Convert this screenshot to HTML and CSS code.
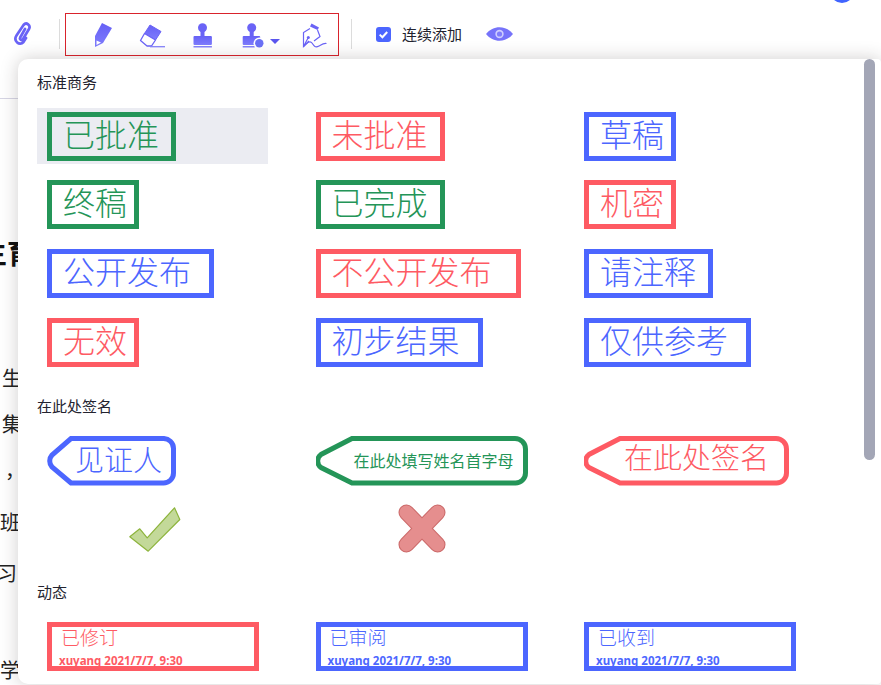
FILE: index.html
```html
<!DOCTYPE html>
<html lang="zh-CN">
<head>
<meta charset="utf-8">
<title>标准商务</title>
<link rel="stylesheet" href="styles.css">
</head>
<body>
<svg class="defs" width="0" height="0" aria-hidden="true">
  <defs>
    <linearGradient id="ig" x1="0" y1="0" x2="0" y2="1">
      <stop offset="0" stop-color="#6660f5"/>
      <stop offset="1" stop-color="#7f7dfd"/>
    </linearGradient>
  </defs>
</svg>
<div class="app">
  <header class="toolbar">
    <svg class="ic-clip" width="20" height="26" viewBox="0 0 20 26"><path d="M13 8 L8.2 16.5 C7.2 18.5 9.8 20 11 18 L17 8 C19 4.5 14.5 0.5 11.5 4 L4.5 14.5 C1 20 7.5 25.5 11.5 21 L14 17" fill="none" stroke="#6a63f6" stroke-width="2.7" stroke-linecap="round"/></svg>
    <span class="divider first"></span>
    <div class="tools">
      <svg class="ic-pencil" width="24" height="28" viewBox="0 0 24 28"><path d="M10 2 L20 7 L11 22 L3 26 L3 15 Z" fill="url(#ig)"/><path d="M4.5 19.5 L9 21.5 L4.5 24 Z" fill="#fff"/></svg>
      <svg class="ic-eraser" width="30" height="28" viewBox="0 0 30 28"><path d="M14 4 L25 10.5 L19.5 19 L8.5 12.5 Z" fill="url(#ig)" stroke="#6a63f6"/><path d="M8.5 12.5 L19.5 19 L15.5 25 L11 25 L4.5 19.5 Z" fill="#fff" stroke="#6a63f6" stroke-width="1.3" stroke-linejoin="round"/><path d="M14 25.7 H29" stroke="#8684fb" stroke-width="1.3"/></svg>
      <svg class="ic-stamp" width="20" height="28" viewBox="0 0 20 28"><circle cx="9.5" cy="6.7" r="4.5" fill="#6a63f6"/><rect x="7.5" y="9" width="4" height="7" fill="#6a63f6"/><rect x="0.5" y="15" width="18.4" height="9" rx="1" fill="url(#ig)"/><rect x="0.5" y="25" width="18.4" height="1.5" fill="#8684fb"/></svg>
      <span class="stamp-menu">
        <svg width="22" height="28" viewBox="0 0 22 28"><circle cx="9.7" cy="6.7" r="4.5" fill="#6a63f6"/><rect x="7.7" y="9" width="4" height="7" fill="#6a63f6"/><rect x="0.7" y="15" width="17.5" height="9" rx="1" fill="url(#ig)"/><rect x="0.7" y="25" width="12" height="1.5" fill="#8684fb"/><circle cx="17.3" cy="22.3" r="5.8" fill="#fff"/><circle cx="17.3" cy="22.3" r="4.2" fill="#6a70f6"/></svg>
        <svg class="caret" width="10" height="5" viewBox="0 0 10 5"><path d="M0 0 H10 L5 5 Z" fill="#5a55ee"/></svg>
      </span>
      <svg class="ic-sign" width="26" height="28" viewBox="0 0 26 28"><path d="M9.5 2.5 L17 6.5 L15.5 9 L8 5.5 Z" fill="#6a63f6"/><path d="M8 7.5 L1.5 11.5 L1.5 25.5 L7 20 M15.5 9 L18 15.5 L12 20" fill="none" stroke="#6a63f6" stroke-width="1.2"/><circle cx="6.3" cy="16.5" r="1.5" fill="#6a63f6"/><path d="M1.5 25.5 L6.3 16.5 M1.5 25.5 C5 22 8 19 10 22 C12 25 13 27 17 25 C19 24 21 22 24.5 22.5" fill="none" stroke="#6a63f6" stroke-width="1.2"/></svg>
    </div>
    <span class="divider second"></span>
    <label class="keep">
      <span class="check"><svg width="15" height="15" viewBox="0 0 15 15"><path d="M3.7 7.6 L6.4 10.2 L11.2 5" fill="none" stroke="#fff" stroke-width="2"/></svg></span>
      <span class="keep-text">连续添加</span>
    </label>
    <svg class="ic-eye" width="27" height="16" viewBox="0 0 27 16"><path d="M0 8 C7 -1 20 -1 27 8 C20 17 7 17 0 8 Z" fill="#7673fa"/><circle cx="13.5" cy="8" r="4.2" fill="#cfceff"/><circle cx="13.5" cy="8" r="2.6" fill="#7f7cfb"/></svg>
    <span class="avatar"></span>
  </header>

  <main class="doc">
    <p class="doc-title">主育</p>
    <p class="doc-line l1">生</p>
    <p class="doc-line l2">集</p>
    <p class="doc-line l3">，</p>
    <p class="doc-line l4">班</p>
    <p class="doc-line l5">习</p>
    <p class="doc-line l6">学</p>
  </main>

  <section class="panel">
    <h2 class="label">标准商务</h2>
    <div class="grid first">
      <div class="cell active"><span class="stamp green w3">已批准</span></div>
      <div class="cell"><span class="stamp red w3">未批准</span></div>
      <div class="cell"><span class="stamp blue w2">草稿</span></div>
      <div class="cell"><span class="stamp green w2">终稿</span></div>
      <div class="cell"><span class="stamp green w3">已完成</span></div>
      <div class="cell"><span class="stamp red w2">机密</span></div>
      <div class="cell"><span class="stamp blue w4">公开发布</span></div>
      <div class="cell"><span class="stamp red w5">不公开发布</span></div>
      <div class="cell"><span class="stamp blue w3">请注释</span></div>
      <div class="cell"><span class="stamp red w2">无效</span></div>
      <div class="cell"><span class="stamp blue w4">初步结果</span></div>
      <div class="cell"><span class="stamp blue w4">仅供参考</span></div>
    </div>

    <h2 class="label gap">在此处签名</h2>
    <div class="grid">
      <div class="cell">
        <span class="tag blue t-witness">
          <svg class="tag-shape" width="129" height="50" viewBox="0 0 129 50"><path d="M24 2.5 H116 A10 10 0 0 1 126.5 12.5 V37 A10 10 0 0 1 116 47 H24 L5 31 A9 9 0 0 1 5 19 Z" fill="none" stroke="#4c66ff" stroke-width="5"/></svg>
          见证人
        </span>
      </div>
      <div class="cell">
        <span class="tag green t-initial">
          <svg class="tag-shape" width="212" height="50" viewBox="0 0 212 50"><path d="M36 2.5 H199 A10.5 10.5 0 0 1 209.5 13 V37 A10 10 0 0 1 199 47 H36 L5 31.5 A8 8 0 0 1 5 18.5 Z" fill="none" stroke="#249558" stroke-width="5"/></svg>
          在此处填写姓名首字母
        </span>
      </div>
      <div class="cell">
        <span class="tag red t-sign">
          <svg class="tag-shape" width="205" height="50" viewBox="0 0 205 50"><path d="M36 2.5 H192 A10.5 10.5 0 0 1 202.5 13 V37 A10 10 0 0 1 192 47 H36 L5 31.5 A8 8 0 0 1 5 18.5 Z" fill="none" stroke="#fe5a63" stroke-width="5"/></svg>
          在此处签名
        </span>
      </div>
      <div class="cell center">
        <svg width="56" height="50" viewBox="0 0 56 50"><path d="M4.8 32.8 L14.8 24.8 L22.2 33.8 L49.5 3.8 L54.8 15.5 L23.2 47.2 Z" fill="#c3d999" stroke="#8db43c" stroke-width="1.2" stroke-linejoin="round"/></svg>
      </div>
      <div class="cell center">
        <svg width="56" height="50" viewBox="0 0 56 50" fill="none" stroke-linecap="round"><path d="M13.5 8.5 L44.5 40.5 M44.5 8.5 L13.5 40.5" stroke="#cc6a6a" stroke-width="16"/><path d="M13.5 8.5 L44.5 40.5 M44.5 8.5 L13.5 40.5" stroke="#e58e8e" stroke-width="14"/></svg>
      </div>
      <div class="cell"></div>
    </div>

    <h2 class="label gap">动态</h2>
    <div class="grid">
      <div class="cell"><span class="dyn red"><span class="dyn-title">已修订</span><span class="dyn-meta">xuyang 2021/7/7, 9:30</span></span></div>
      <div class="cell"><span class="dyn blue"><span class="dyn-title">已审阅</span><span class="dyn-meta">xuyang 2021/7/7, 9:30</span></span></div>
      <div class="cell"><span class="dyn blue"><span class="dyn-title">已收到</span><span class="dyn-meta">xuyang 2021/7/7, 9:30</span></span></div>
    </div>
    <span class="scrollbar"></span>
  </section>
</div>
</body>
</html>
```

FILE: styles.css
```css
* { box-sizing: border-box; }
html, body { margin: 0; height: 100%; overflow: hidden; background: #fff; }
body { font-family: "Noto Sans CJK SC", "Liberation Sans", sans-serif; color: #23232f; }
.defs { position: absolute; }
.app { position: relative; width: 881px; height: 685px; overflow: hidden; }

.toolbar { position: relative; display: flex; align-items: center; height: 59px; padding-top: 9px; background: #fff; }
.ic-clip { margin-left: 12px; }
.divider { width: 1px; height: 30px; background: #dcdcdc; flex: none; }
.divider.first { margin-left: 27px; }
.tools { display: flex; align-items: center; width: 274px; height: 43px; margin-left: 5px; margin-top: 1px; border: 1px solid #d9232c; flex: none; }
.ic-pencil { margin-left: 26px; }
.ic-eraser { margin-left: 20px; }
.ic-stamp { margin-left: 27px; }
.stamp-menu { display: flex; align-items: flex-end; margin-left: 29px; }
.caret { margin: 0 0 5px 6px; }
.ic-sign { margin-left: 22px; }
.divider.second { margin-left: 12px; }
.keep { display: flex; align-items: center; margin-left: 24px; }
.check { display: block; width: 15px; height: 15px; border-radius: 3px; background: #4c66ff; }
.check svg { display: block; }
.keep-text { margin-left: 11px; font-size: 15px; line-height: 20px; white-space: nowrap; }
.ic-eye { margin-left: 24px; }
.avatar { position: absolute; left: 830px; top: -21px; width: 24px; height: 24px; border-radius: 50%; background: #4064ff; }

.doc { height: 626px; overflow: hidden; }
.doc::before { content: ""; display: block; height: 1px; margin-top: 39px; background: #d6d5e4; }
.doc p { margin: 0; white-space: nowrap; }
.doc-title { margin-top: 137px !important; margin-left: -21px !important; font-size: 28px; line-height: 32px; font-weight: 700; color: #111; }
.doc-line { font-size: 20px; line-height: 28px; color: #222; }
.l1 { margin: 96px 0 0 2px !important; }
.l2 { margin: 18px 0 0 2px !important; }
.l3 { margin: 18px 0 0 5px !important; }
.l4 { margin: 24px 0 0 0 !important; }
.l5 { margin: 23px 0 0 -3px !important; }
.l6 { margin: 69px 0 0 0 !important; }

.panel { position: absolute; left: 18px; top: 59px; right: 0; bottom: 1px; padding: 13px 0 0 19px; background: #fff; border-radius: 10px 4px 4px 10px; box-shadow: 0 0 18px rgba(40, 30, 30, .22); overflow: hidden; }
.label { margin: 0; font-size: 15px; font-weight: 400; line-height: 20px; }
.label.gap { margin-top: 26px; }
.grid { display: grid; grid-template-columns: repeat(3, 231px); column-gap: 37.5px; row-gap: 12.67px; margin-top: 16px; }
.grid.first { margin-top: 15.6px; }
.cell { display: flex; align-items: flex-start; height: 56px; padding: 4px 10px 3px; }
.cell.active { background: #ebecf2; }
.cell.center { justify-content: center; padding: 4px 0 0; }

.green { color: #249558; border-color: #249558; }
.red { color: #fe5a63; border-color: #fe5a63; }
.blue { color: #4c66ff; border-color: #4c66ff; }

.stamp { display: block; flex: none; height: 49px; padding-left: 11px; border: 5px solid; font-size: 32px; font-weight: 300; line-height: 33px; white-space: nowrap; }
.w2 { width: 92px; }
.w3 { width: 129px; }
.w4 { width: 167px; }
.w5 { width: 205px; }

.tag { position: relative; display: block; flex: none; height: 50px; font-weight: 300; white-space: nowrap; }
.tag-shape { position: absolute; left: 0; top: 0; }
.t-witness { width: 129px; padding-left: 28px; font-size: 29px; line-height: 44px; }
.t-initial { width: 212px; padding-left: 38px; font-size: 16px; font-weight: 400; line-height: 48px; }
.t-sign { width: 205px; padding-left: 40px; font-size: 29px; line-height: 41px; }

.dyn { display: flex; flex: none; flex-direction: column; width: 212px; height: 49px; border: 5px solid; padding-left: 7px; }
.dyn-title { margin-left: 2px; font-size: 19px; font-weight: 300; line-height: 19px; white-space: nowrap; }
.dyn-meta { margin-top: 8px; font-family: "Noto Sans", sans-serif; font-size: 11.5px; font-weight: 700; line-height: 13px; white-space: nowrap; }

.scrollbar { position: absolute; right: 6px; top: 0; width: 11px; height: 401px; border-radius: 6px; background: #a3a6b6; }
```
